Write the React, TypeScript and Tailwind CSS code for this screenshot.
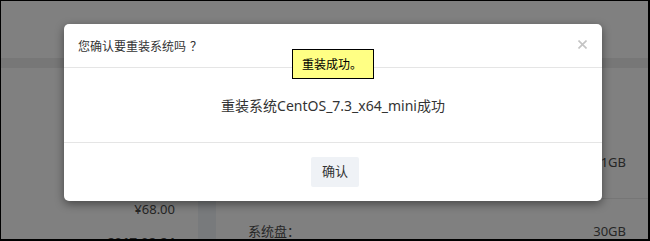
import React from "react";

export default function App() {
  return (
    <div className="w-[650px] h-[241px] relative overflow-hidden border-t border-l border-r-2 border-b-2 border-black bg-[#808080] font-['Noto_Sans','Noto_Sans_CJK_SC',sans-serif] text-[#262626]">
      {/* dimmed page behind the dialog */}
      <div className="h-[57px]" />
      <div className="h-[10px] bg-[#777777]" />
      <div className="flex h-[173px]">
        <div className="w-[197px] flex flex-col items-end pr-[23px] pt-[131px]">
          <div className="h-[20px] leading-[20px] text-[13px]">¥68.00</div>
          <div className="mt-[13px] h-[20px] leading-[20px] text-[13px] font-bold">2017-02-24</div>
        </div>
        <div className="w-[18px] bg-[#787a7c] mt-[8px]" />
        <div className="flex-1 flex flex-col">
          <div className="h-[132px] border-b border-[#767676] flex items-end justify-end pr-[22px] pb-[26px]">
            <span className="text-[13px] leading-[20px]">1GB</span>
          </div>
          <div className="flex justify-between items-center pl-[32px] pr-[22px] pt-[22px]">
            <span className="text-[13px] leading-[20px]">系统盘：</span>
            <span className="text-[13px] leading-[20px]">30GB</span>
          </div>
        </div>
      </div>

      {/* dialog */}
      <div className="absolute left-[63px] top-[23px] w-[538px] h-[177px] bg-white rounded-[5px] shadow-[0_3px_10px_rgba(0,0,0,0.45)] flex flex-col">
        <div className="h-[44px] border-b border-[#e5e5e5] flex items-center justify-between pl-[14px] pr-[15px]">
          <span className="text-[12px] text-[#333] font-['Noto_Sans_CJK_SC',sans-serif]">
            您确认要重装系统吗<span className="ml-[4px]">？</span>
          </span>
          <svg width="9" height="9" viewBox="0 0 9 9" className="mt-[-3px]">
            <path d="M0.5 0.5 L8.5 8.5 M8.5 0.5 L0.5 8.5" stroke="#c4c4c4" strokeWidth="1.6" />
          </svg>
        </div>
        <div className="h-[75px] border-b border-[#e5e5e5] flex items-center justify-center">
          <span className="text-[14px] text-[#333]">重装系统CentOS_7.3_x64_mini成功</span>
        </div>
        <div className="flex-1 flex items-center justify-center">
          <button className="w-[48px] h-[30px] bg-[#eff2f6] text-[13px] text-[#333] rounded-[2px] ml-[4px] mt-[-1px]">确认</button>
        </div>
        <div className="absolute left-[228px] top-[25px] w-[82px] h-[30px] bg-[#ffff84] border border-black flex items-center pl-[9px] text-[12px] text-black font-normal font-['Noto_Sans_CJK_SC',sans-serif]">
          重装成功。
        </div>
      </div>
    </div>
  );
}
